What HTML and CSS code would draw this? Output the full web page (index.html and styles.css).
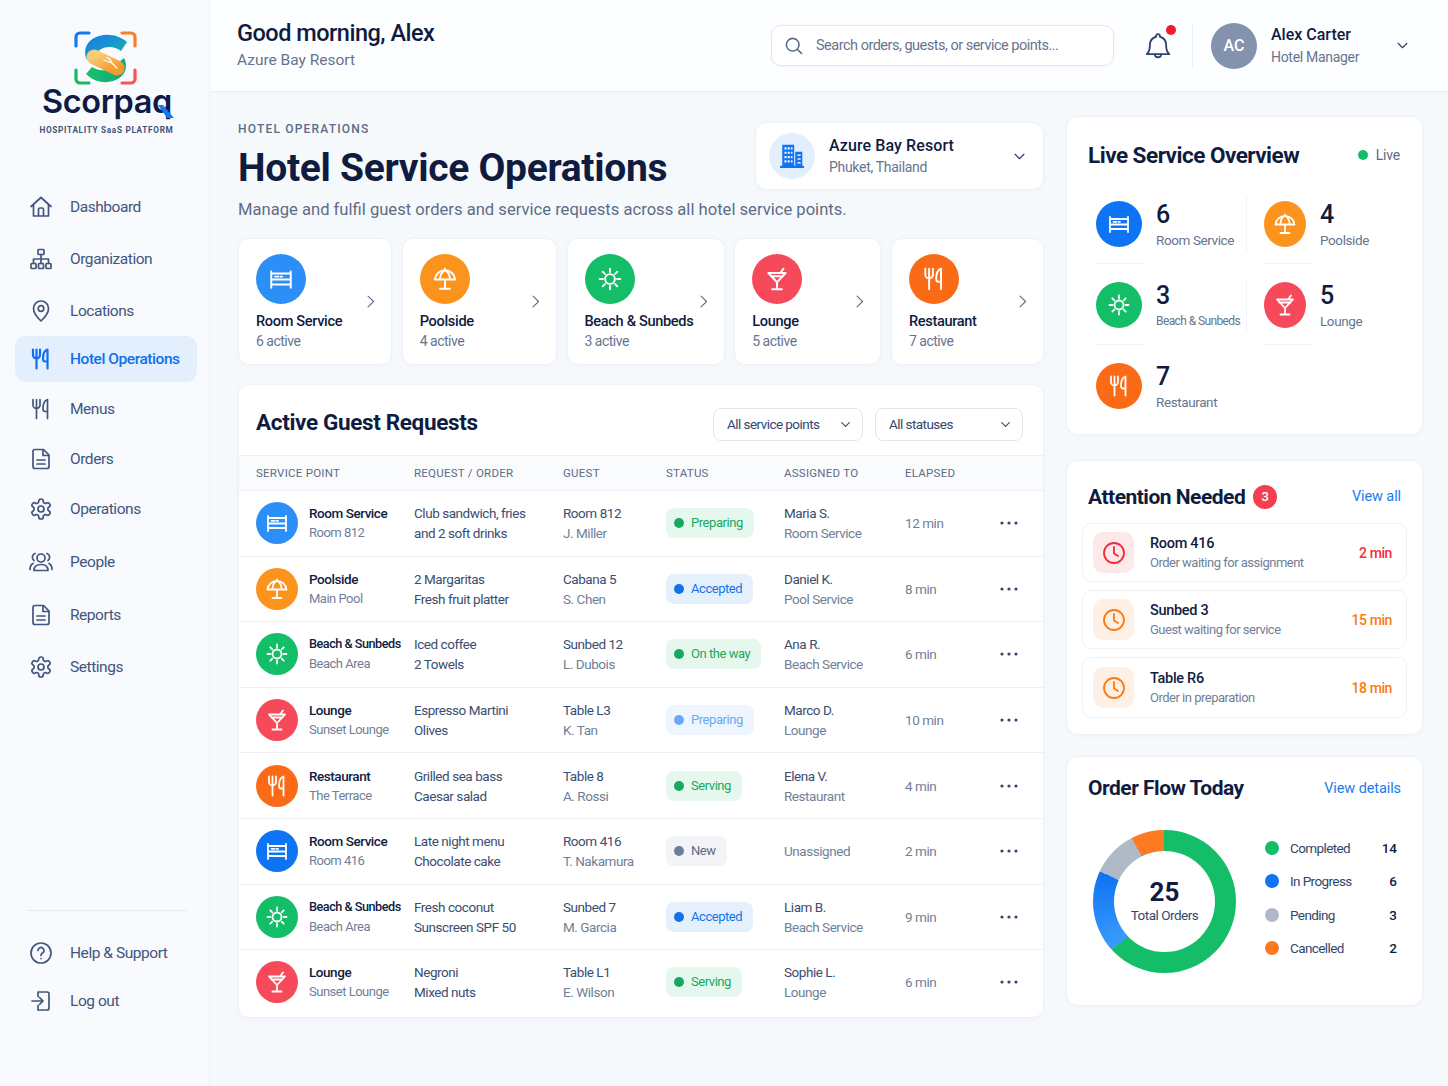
FILE: index.html
```html
<!DOCTYPE html>
<html lang="en">
<head>
  <meta charset="UTF-8" />
  <meta name="viewport" content="width=device-width, initial-scale=1.0"/>
  <title>Hotel Service Operations</title>
  <link rel="stylesheet" href="styles.css">
</head>
<body>

<svg class="sprite" aria-hidden="true">
  <symbol id="i-home" viewBox="0 0 24 24"><path d="M2 11.5 12 2.500l10 9M4.500 9.500v11.500h15V9.500M9.500 21v-6.500a1.500 1.500 0 0 1 1.500-1.500h2a1.500 1.500 0 0 1 1.500 1.500V21"/></symbol>
  <symbol id="i-org" viewBox="0 0 24 24"><rect x="9" y="2.500" width="6" height="5" rx=".8"/><rect x="2" y="16.500" width="5" height="5" rx=".8"/><rect x="9.500" y="16.500" width="5" height="5" rx=".8"/><rect x="17" y="16.500" width="5" height="5" rx=".8"/><path d="M12 7.500v9M4.500 16.500V12h15v4.500"/></symbol>
  <symbol id="i-pin" viewBox="0 0 24 24"><path d="M12 22s-7.500-7-7.500-12.500a7.500 7.500 0 0 1 15 0C19.500 15 12 22 12 22z"/><circle cx="12" cy="9.500" r="2.800"/></symbol>
  <symbol id="i-fork" viewBox="0 0 24 24"><path d="M4 2.500V8a3.500 3.500 0 0 0 7 0V2.500M7.500 2.500v19M18.500 21.500V2.500c-3 1-4.500 5-4.500 9 0 2 1 3 2 3h2.500"/></symbol>
  <symbol id="i-doc" viewBox="0 0 24 24"><path d="M6 2.500h8.500L20 8v11.500a2 2 0 0 1-2 2H6a2 2 0 0 1-2-2v-15a2 2 0 0 1 2-2z"/><path d="M14 3v5.500h5.500M8 13h8M8 17h8"/></symbol>
  <symbol id="i-gear" viewBox="0 0 24 24"><path d="M12.220 2h-.44a2 2 0 0 0-2 2v.18a2 2 0 0 1-1 1.730l-.43.25a2 2 0 0 1-2 0l-.15-.08a2 2 0 0 0-2.730.73l-.22.38a2 2 0 0 0 .73 2.730l.15.1a2 2 0 0 1 1 1.720v.51a2 2 0 0 1-1 1.740l-.15.09a2 2 0 0 0-.73 2.730l.22.38a2 2 0 0 0 2.730.73l.15-.08a2 2 0 0 1 2 0l.43.25a2 2 0 0 1 1 1.730V20a2 2 0 0 0 2 2h.44a2 2 0 0 0 2-2v-.18a2 2 0 0 1 1-1.730l.43-.25a2 2 0 0 1 2 0l.15.08a2 2 0 0 0 2.730-.73l.22-.39a2 2 0 0 0-.73-2.730l-.15-.08a2 2 0 0 1-1-1.740v-.5a2 2 0 0 1 1-1.740l.15-.09a2 2 0 0 0 .73-2.730l-.22-.38a2 2 0 0 0-2.730-.73l-.15.08a2 2 0 0 1-2 0l-.43-.25a2 2 0 0 1-1-1.730V4a2 2 0 0 0-2-2z"/><circle cx="12" cy="12" r="3"/></symbol>
  <symbol id="i-people" viewBox="0 0 24 24"><circle cx="12" cy="8" r="4"/><path d="M5 20.500c0-4 3-6 7-6s7 2 7 6zM6 3.500a4 4 0 0 0-1 7M18 3.500a4 4 0 0 1 1 7M1 19.500c0-3 1-5 3-6M23 19.500c0-3-1-5-3-6"/></symbol>
  <symbol id="i-help" viewBox="0 0 24 24"><circle cx="12" cy="12" r="10"/><path d="M9 9.500a3 3 0 1 1 4.500 2.600c-1 .6-1.500 1.200-1.500 2.400"/><path d="M12 17.500v.1"/></symbol>
  <symbol id="i-logout" viewBox="0 0 24 24"><path d="M9 3h9a2 2 0 0 1 2 2v14a2 2 0 0 1-2 2H9M9 7.500V3M9 21v-4.500M3 12h11M10.500 8.500 14 12l-3.500 3.500"/></symbol>
  <symbol id="i-search" viewBox="0 0 24 24"><circle cx="11" cy="11" r="8"/><path d="m17 17 5 5"/></symbol>
  <symbol id="i-bell" viewBox="0 0 24 24"><path d="M12 2.500a1.500 1.500 0 0 0-1.500 1.500v.6C7 5.500 5.500 8.500 5.500 11.500c0 4-1 5.500-2.500 7h18c-1.500-1.500-2.500-3-2.500-7 0-3-1.500-6-5-6.900V4A1.500 1.500 0 0 0 12 2.500z"/><path d="M9.500 18.500a2.500 2.500 0 0 0 5 0"/></symbol>
  <symbol id="i-down" viewBox="0 0 24 24"><path d="m5 8.500 7 7 7-7"/></symbol>
  <symbol id="i-right" viewBox="0 0 24 24"><path d="m8 3.500 9 8.500-9 8.500"/></symbol>
  <symbol id="i-bed" viewBox="0 0 24 24"><path d="M3 5v15M21 5v15M3 7h18M3 12.500h18M3 17h18M6.500 9.800h3M11.500 9.800h1.500"/></symbol>
  <symbol id="i-umbrella" viewBox="0 0 24 24"><path d="M2.500 12.500C3 7.500 7 4 12 4s9 3.500 9.500 8.500zM7.500 12.500C7.500 8.500 9.500 5 12 4c2.500 1 4.500 4.500 4.500 8.500M12 2.500V4M12 12.500V21M7.500 21h9"/></symbol>
  <symbol id="i-sun" viewBox="0 0 24 24"><circle cx="12" cy="12" r="4.500"/><path d="M12 2.500v3M12 18.500v3M2.500 12h3M18.500 12h3M5.300 5.300l2 2M16.700 16.700l2 2M5.300 18.700l2-2M16.700 7.300l2-2"/></symbol>
  <symbol id="i-martini" viewBox="0 0 24 24"><path d="M4 6.500h16L12 15zM12 15v6.500M7.500 21.500h9M6.500 9.500h11M15 6.500 18 2.500"/></symbol>
  <symbol id="i-clock" viewBox="0 0 24 24"><circle cx="12" cy="12" r="10"/><path d="M12 6v6.500l4 2.500"/></symbol>
  <symbol id="i-more" viewBox="0 0 18 6"><circle cx="2" cy="3" r="1.600"/><circle cx="9" cy="3" r="1.600"/><circle cx="16" cy="3" r="1.600"/></symbol>
</svg>

<aside class="sidebar">
  <div class="logo">
    <svg class="logo-mark" viewBox="0 0 64 56" width="64" height="56">
      <defs>
        <linearGradient id="lg-top" x1="0" y1="0" x2="1" y2="1"><stop offset="0" stop-color="#1778f2"/><stop offset="1" stop-color="#18b9a4"/></linearGradient>
        <linearGradient id="lg-mid" x1="0" y1="0" x2="1" y2="1"><stop offset="0" stop-color="#f8cb75"/><stop offset="1" stop-color="#f59a2e"/></linearGradient>
        <linearGradient id="lg-bot" x1="0" y1="0" x2="1" y2="0"><stop offset="0" stop-color="#17c26b"/><stop offset="1" stop-color="#12a57b"/></linearGradient>
      </defs>
      <g fill="none" stroke-width="3.200" stroke-linecap="round">
        <path stroke="#1778f2" d="M2 15V6a4 4 0 0 1 4-4h9"/>
        <path stroke="#fb7d2a" d="M48 2h9a4 4 0 0 1 4 4v9"/>
        <path stroke="#19b963" d="M2 39v9a4 4 0 0 0 4 4h9"/>
        <path stroke="#f7564a" d="M61 39v9a4 4 0 0 1-4 4h-9"/>
      </g>
      <path fill="url(#lg-top)" d="M53 11 47 20C39 14 26 14 20 26L13 29C8 18 14 8 25 5 35 2 46 5 53 11Z"/>
      <path fill="url(#lg-bot)" d="M12 43 18 36C26 41 38 41 44 32L50 27C55 37 50 47 39 50 29 53 19 50 12 43Z"/>
      <path fill="none" stroke="url(#lg-mid)" stroke-width="15" stroke-linecap="round" d="M20 26 43 37"/>
      <path fill="none" stroke="#fff" stroke-width="1.300" stroke-linecap="round" d="M30 29 38 32 43 37M33 26.500 36 28.500 38 32"/>
    </svg>
    <div class="logo-word">Scorpaq<svg class="logo-tail" viewBox="0 0 16 14" width="16" height="14"><path fill="#1778f2" d="M0 0h5l11 13H9z"/></svg></div>
    <div class="logo-tag">HOSPITALITY SaaS PLATFORM</div>
  </div>

  <nav class="nav">
    <a class="nav-item"><svg class="icon nav-icon"><use href="#i-home"/></svg>Dashboard</a>
    <a class="nav-item"><svg class="icon nav-icon"><use href="#i-org"/></svg>Organization</a>
    <a class="nav-item"><svg class="icon nav-icon"><use href="#i-pin"/></svg>Locations</a>
    <a class="nav-item active"><svg class="icon nav-icon"><use href="#i-fork"/></svg>Hotel Operations</a>
    <a class="nav-item nav-tight"><svg class="icon nav-icon"><use href="#i-fork"/></svg>Menus</a>
    <a class="nav-item nav-tight"><svg class="icon nav-icon"><use href="#i-doc"/></svg>Orders</a>
    <a class="nav-item nav-tight"><svg class="icon nav-icon"><use href="#i-gear"/></svg>Operations</a>
    <a class="nav-item nav-wide"><svg class="icon nav-icon"><use href="#i-people"/></svg>People</a>
    <a class="nav-item nav-wide"><svg class="icon nav-icon"><use href="#i-doc"/></svg>Reports</a>
    <a class="nav-item"><svg class="icon nav-icon"><use href="#i-gear"/></svg>Settings</a>
  </nav>

  <div class="side-foot">
    <a class="nav-item"><svg class="icon nav-icon"><use href="#i-help"/></svg>Help &amp; Support</a>
    <a class="nav-item"><svg class="icon nav-icon"><use href="#i-logout"/></svg>Log out</a>
  </div>
</aside>

<div class="content">
  <header class="topbar">
    <div class="greeting">
      <h2>Good morning, Alex</h2>
      <p>Azure Bay Resort</p>
    </div>
    <div class="search">
      <svg class="icon search-icon"><use href="#i-search"/></svg>
      <span>Search orders, guests, or service points...</span>
    </div>
    <div class="bell">
      <svg class="icon bell-icon"><use href="#i-bell"/></svg>
      <span class="bell-dot"></span>
    </div>
    <div class="user">
      <div class="avatar">AC</div>
      <div class="user-text">
        <div class="user-name">Alex Carter</div>
        <div class="user-role">Hotel Manager</div>
      </div>
      <svg class="icon user-caret"><use href="#i-down"/></svg>
    </div>
  </header>

  <main class="workspace">
    <div class="left-col">
      <div class="page-head">
        <div>
          <div class="eyebrow">HOTEL OPERATIONS</div>
          <h1>Hotel Service Operations</h1>
        </div>
        <div class="switcher">
          <div class="switcher-icon">
            <svg viewBox="0 0 24 24" width="26" height="26"><path fill="#0f74f3" d="M3 1.500h11v20H3zM15 8h6.500v13.500H15zM1 21h22v2H1z"/><path fill="#e6f1fd" d="M5 4h2v2H5zM8 4h2v2H8zM11 4h1.500v2H11zM5 8h2v2H5zM8 8h2v2H8zM11 8h1.500v2H11zM5 12h2v2H5zM8 12h2v2H8zM11 12h1.500v2H11zM5 16h2v2H5zM8 16h2v2H8zM11 16h1.500v2H11zM17 10.500h3v1.500h-3zM17 14h3v1.500h-3zM17 17.500h3V19h-3z"/></svg>
          </div>
          <div class="switcher-text">
            <div class="switcher-name">Azure Bay Resort</div>
            <div class="switcher-place">Phuket, Thailand</div>
          </div>
          <svg class="icon switcher-caret"><use href="#i-down"/></svg>
        </div>
      </div>
      <p class="page-desc">Manage and fulfil guest orders and service requests across all hotel service points.</p>

      <div class="service-cards">
        <div class="service-card">
          <div class="round c-blue"><svg class="icon"><use href="#i-bed"/></svg></div>
          <div class="service-name">Room Service</div>
          <div class="service-sub">6 active</div>
          <svg class="icon service-arrow"><use href="#i-right"/></svg>
        </div>
        <div class="service-card">
          <div class="round c-orange"><svg class="icon"><use href="#i-umbrella"/></svg></div>
          <div class="service-name">Poolside</div>
          <div class="service-sub">4 active</div>
          <svg class="icon service-arrow"><use href="#i-right"/></svg>
        </div>
        <div class="service-card">
          <div class="round c-green"><svg class="icon"><use href="#i-sun"/></svg></div>
          <div class="service-name">Beach &amp; Sunbeds</div>
          <div class="service-sub">3 active</div>
          <svg class="icon service-arrow"><use href="#i-right"/></svg>
        </div>
        <div class="service-card">
          <div class="round c-red"><svg class="icon"><use href="#i-martini"/></svg></div>
          <div class="service-name">Lounge</div>
          <div class="service-sub">5 active</div>
          <svg class="icon service-arrow"><use href="#i-right"/></svg>
        </div>
        <div class="service-card">
          <div class="round c-flame"><svg class="icon"><use href="#i-fork"/></svg></div>
          <div class="service-name">Restaurant</div>
          <div class="service-sub">7 active</div>
          <svg class="icon service-arrow"><use href="#i-right"/></svg>
        </div>
      </div>

      <section class="requests">
        <div class="requests-head">
          <h3>Active Guest Requests</h3>
          <div class="filters">
            <div class="select select-wide">All service points<svg class="icon"><use href="#i-down"/></svg></div>
            <div class="select">All statuses<svg class="icon"><use href="#i-down"/></svg></div>
          </div>
        </div>

        <div class="req-row req-labels">
          <div>SERVICE POINT</div><div>REQUEST / ORDER</div><div>GUEST</div><div>STATUS</div><div>ASSIGNED TO</div><div>ELAPSED</div><div></div>
        </div>

        <div class="req-row">
          <div class="point"><div class="round c-blue"><svg class="icon"><use href="#i-bed"/></svg></div><div><div class="strong">Room Service</div><div class="muted">Room 812</div></div></div>
          <div><div class="body-text">Club sandwich, fries</div><div class="body-text">and 2 soft drinks</div></div>
          <div><div class="body-text">Room 812</div><div class="muted">J. Miller</div></div>
          <div><span class="pill pill-green">Preparing</span></div>
          <div><div class="body-text">Maria S.</div><div class="muted">Room Service</div></div>
          <div class="muted">12 min</div>
          <svg class="more"><use href="#i-more"/></svg>
        </div>
        <div class="req-row">
          <div class="point"><div class="round c-orange"><svg class="icon"><use href="#i-umbrella"/></svg></div><div><div class="strong">Poolside</div><div class="muted">Main Pool</div></div></div>
          <div><div class="body-text">2 Margaritas</div><div class="body-text">Fresh fruit platter</div></div>
          <div><div class="body-text">Cabana 5</div><div class="muted">S. Chen</div></div>
          <div><span class="pill pill-blue">Accepted</span></div>
          <div><div class="body-text">Daniel K.</div><div class="muted">Pool Service</div></div>
          <div class="muted">8 min</div>
          <svg class="more"><use href="#i-more"/></svg>
        </div>
        <div class="req-row">
          <div class="point"><div class="round c-green"><svg class="icon"><use href="#i-sun"/></svg></div><div><div class="strong narrow">Beach &amp; Sunbeds</div><div class="muted">Beach Area</div></div></div>
          <div><div class="body-text">Iced coffee</div><div class="body-text">2 Towels</div></div>
          <div><div class="body-text">Sunbed 12</div><div class="muted">L. Dubois</div></div>
          <div><span class="pill pill-green">On the way</span></div>
          <div><div class="body-text">Ana R.</div><div class="muted">Beach Service</div></div>
          <div class="muted">6 min</div>
          <svg class="more"><use href="#i-more"/></svg>
        </div>
        <div class="req-row">
          <div class="point"><div class="round c-red"><svg class="icon"><use href="#i-martini"/></svg></div><div><div class="strong">Lounge</div><div class="muted">Sunset Lounge</div></div></div>
          <div><div class="body-text">Espresso Martini</div><div class="body-text">Olives</div></div>
          <div><div class="body-text">Table L3</div><div class="muted">K. Tan</div></div>
          <div><span class="pill pill-sky">Preparing</span></div>
          <div><div class="body-text">Marco D.</div><div class="muted">Lounge</div></div>
          <div class="muted">10 min</div>
          <svg class="more"><use href="#i-more"/></svg>
        </div>
        <div class="req-row">
          <div class="point"><div class="round c-flame"><svg class="icon"><use href="#i-fork"/></svg></div><div><div class="strong">Restaurant</div><div class="muted">The Terrace</div></div></div>
          <div><div class="body-text">Grilled sea bass</div><div class="body-text">Caesar salad</div></div>
          <div><div class="body-text">Table 8</div><div class="muted">A. Rossi</div></div>
          <div><span class="pill pill-green">Serving</span></div>
          <div><div class="body-text">Elena V.</div><div class="muted">Restaurant</div></div>
          <div class="muted">4 min</div>
          <svg class="more"><use href="#i-more"/></svg>
        </div>
        <div class="req-row">
          <div class="point"><div class="round c-deep"><svg class="icon"><use href="#i-bed"/></svg></div><div><div class="strong">Room Service</div><div class="muted">Room 416</div></div></div>
          <div><div class="body-text">Late night menu</div><div class="body-text">Chocolate cake</div></div>
          <div><div class="body-text">Room 416</div><div class="muted">T. Nakamura</div></div>
          <div><span class="pill pill-grey">New</span></div>
          <div class="muted">Unassigned</div>
          <div class="muted">2 min</div>
          <svg class="more"><use href="#i-more"/></svg>
        </div>
        <div class="req-row">
          <div class="point"><div class="round c-green"><svg class="icon"><use href="#i-sun"/></svg></div><div><div class="strong narrow">Beach &amp; Sunbeds</div><div class="muted">Beach Area</div></div></div>
          <div><div class="body-text">Fresh coconut</div><div class="body-text">Sunscreen SPF 50</div></div>
          <div><div class="body-text">Sunbed 7</div><div class="muted">M. Garcia</div></div>
          <div><span class="pill pill-blue">Accepted</span></div>
          <div><div class="body-text">Liam B.</div><div class="muted">Beach Service</div></div>
          <div class="muted">9 min</div>
          <svg class="more"><use href="#i-more"/></svg>
        </div>
        <div class="req-row">
          <div class="point"><div class="round c-red"><svg class="icon"><use href="#i-martini"/></svg></div><div><div class="strong">Lounge</div><div class="muted">Sunset Lounge</div></div></div>
          <div><div class="body-text">Negroni</div><div class="body-text">Mixed nuts</div></div>
          <div><div class="body-text">Table L1</div><div class="muted">E. Wilson</div></div>
          <div><span class="pill pill-green">Serving</span></div>
          <div><div class="body-text">Sophie L.</div><div class="muted">Lounge</div></div>
          <div class="muted">6 min</div>
          <svg class="more"><use href="#i-more"/></svg>
        </div>
      </section>
    </div>

    <div class="right-col">
      <section class="panel panel-live">
        <div class="panel-head">
          <h3>Live Service Overview</h3>
          <span class="live"><i></i>Live</span>
        </div>
        <div class="live-grid">
          <div class="live-item">
            <div class="round c-deep"><svg class="icon"><use href="#i-bed"/></svg></div>
            <div><div class="live-num">6</div><div class="live-label">Room Service</div></div>
          </div>
          <div class="live-item">
            <div class="round c-orange"><svg class="icon"><use href="#i-umbrella"/></svg></div>
            <div><div class="live-num">4</div><div class="live-label">Poolside</div></div>
          </div>
          <div class="live-item">
            <div class="round c-green"><svg class="icon"><use href="#i-sun"/></svg></div>
            <div><div class="live-num">3</div><div class="live-label narrow-label">Beach &amp; Sunbeds</div></div>
          </div>
          <div class="live-item">
            <div class="round c-red"><svg class="icon"><use href="#i-martini"/></svg></div>
            <div><div class="live-num">5</div><div class="live-label">Lounge</div></div>
          </div>
          <div class="live-item">
            <div class="round c-flame"><svg class="icon"><use href="#i-fork"/></svg></div>
            <div><div class="live-num">7</div><div class="live-label">Restaurant</div></div>
          </div>
        </div>
      </section>

      <section class="panel panel-attention">
        <div class="panel-head">
          <h3>Attention Needed <span class="count">3</span></h3>
          <a class="panel-link">View all</a>
        </div>
        <div class="alert">
          <div class="alert-icon tone-red"><svg class="icon"><use href="#i-clock"/></svg></div>
          <div class="alert-text"><div class="alert-title">Room 416</div><div class="alert-sub">Order waiting for assignment</div></div>
          <div class="alert-time time-red">2 min</div>
        </div>
        <div class="alert">
          <div class="alert-icon tone-orange"><svg class="icon"><use href="#i-clock"/></svg></div>
          <div class="alert-text"><div class="alert-title">Sunbed 3</div><div class="alert-sub">Guest waiting for service</div></div>
          <div class="alert-time time-orange">15 min</div>
        </div>
        <div class="alert">
          <div class="alert-icon tone-orange"><svg class="icon"><use href="#i-clock"/></svg></div>
          <div class="alert-text"><div class="alert-title">Table R6</div><div class="alert-sub">Order in preparation</div></div>
          <div class="alert-time time-orange">18 min</div>
        </div>
      </section>

      <section class="panel panel-flow">
        <div class="panel-head">
          <h3>Order Flow Today</h3>
          <a class="panel-link">View details</a>
        </div>
        <div class="flow-body">
          <div class="donut">
            <div class="donut-hole">
              <div class="donut-num">25</div>
              <div class="donut-label">Total Orders</div>
            </div>
          </div>
          <ul class="legend">
            <li><i class="dot-green"></i><span>Completed</span><b>14</b></li>
            <li><i class="dot-blue"></i><span>In Progress</span><b>6</b></li>
            <li><i class="dot-grey"></i><span>Pending</span><b>3</b></li>
            <li><i class="dot-orange"></i><span>Cancelled</span><b>2</b></li>
          </ul>
        </div>
      </section>
    </div>
  </main>
</div>

</body>
</html>
```

FILE: styles.css
```css
* {
  box-sizing: border-box;
}

body {
  margin: 0;
  display: flex;
  min-height: 100vh;
  font-family: Roboto, "Liberation Sans", sans-serif;
  background-color: #f6f9fc;
  color: #101c3f;
}

h1, h2, h3, p, ul {
  margin: 0;
  padding: 0;
}

.sprite {
  display: none;
}

.icon {
  width: 24px;
  height: 24px;
  fill: none;
  stroke: currentColor;
  stroke-width: 1.8;
  stroke-linecap: round;
  stroke-linejoin: round;
  flex: none;
}

/* Sidebar */
.sidebar {
  width: 210px;
  flex: none;
  height: 1086px;
  display: flex;
  flex-direction: column;
  padding: 31px 12px 0 15px;
  background: #f8fafe;
  border-right: 1px solid #edf1f7;
}

.logo {
  display: flex;
  flex-direction: column;
  align-items: center;
  margin-bottom: 49px;
}

.logo-mark {
  display: block;
  margin-right: 1px;
}

.logo-word {
  position: relative;
  font-family: Inter, sans-serif;
  font-size: 32.5px;
  font-weight: 600;
  line-height: 34px;
  letter-spacing: -.4px;
  color: #101b45;
  margin: -2px 0 0 2px;
}

.logo-tail {
  position: absolute;
  right: -2px;
  bottom: 0;
}

.logo-tag {
  font-size: 8.2px;
  font-weight: 700;
  letter-spacing: .7px;
  color: #3f5378;
  margin: 6px 0 0 1px;
  white-space: nowrap;
}

.nav-item {
  display: flex;
  align-items: center;
  gap: 17px;
  height: 46px;
  margin-top: 6px;
  padding-left: 14px;
  border-radius: 11px;
  font-size: 15.5px;
  letter-spacing: -.45px;
  color: #42557c;
}

.nav-item:first-child {
  margin-top: 0;
}

.nav-tight {
  margin-top: 4px;
}

.nav-wide {
  margin-top: 7px;
}

.nav-icon {
  stroke-width: 1.7;
}

.nav-item.active {
  margin-top: 2px;
  background: #e3effd;
  color: #0f6ff0;
  font-weight: 500;
}

.nav-item.active .nav-icon {
  stroke-width: 2.2;
}

.side-foot {
  margin-top: auto;
  margin-bottom: 60px;
  margin-left: 12px;
  margin-right: 9px;
  padding-top: 19px;
  border-top: 1px solid #e6ebf3;
}

.side-foot .nav-item {
  margin: 0 0 2px -12px;
}

/* Top bar */
.content {
  flex: 1;
  min-width: 0;
}

.topbar {
  height: 92px;
  display: flex;
  align-items: center;
  padding: 0 33px 0 27px;
  background: #fdfeff;
  border-bottom: 1px solid #e9eef5;
}

.greeting {
  width: 534px;
  flex: none;
  margin-bottom: 5px;
}

.greeting h2 {
  font-size: 23.5px;
  font-weight: 500;
  line-height: 30px;
  letter-spacing: -.5px;
  margin-bottom: 3px;
  color: #101c3f;
}

.greeting p {
  font-size: 15.5px;
  color: #64748f;
}

.search {
  width: 343px;
  height: 41px;
  display: flex;
  align-items: center;
  gap: 13px;
  padding-left: 12px;
  background: #fff;
  border: 1px solid #e2e8f1;
  border-radius: 10px;
  font-size: 14.5px;
  letter-spacing: -.5px;
  color: #66758f;
  box-shadow: 0 1px 3px rgba(40, 60, 100, .05);
}

.search-icon {
  width: 19px;
  height: 19px;
  stroke-width: 2;
  color: #5b6d8c;
}

.bell {
  position: relative;
  width: 30px;
  height: 30px;
  margin-left: 29px;
  color: #33466d;
}

.bell-icon {
  width: 30px;
  height: 30px;
  stroke-width: 1.5;
}

.bell-dot {
  position: absolute;
  top: -6px;
  right: -3px;
  width: 10px;
  height: 10px;
  border-radius: 50%;
  background: #f01c2c;
}

.user {
  display: flex;
  align-items: center;
  height: 42px;
  margin-left: 19px;
  padding-left: 18px;
  border-left: 1px solid #e9eef5;
}

.avatar {
  width: 46px;
  height: 46px;
  border-radius: 50%;
  display: flex;
  align-items: center;
  justify-content: center;
  background: #8493ad;
  color: #fff;
  font-size: 16px;
  font-weight: 500;
}

.user-text {
  margin-left: 14px;
  width: 127px;
}

.user-name {
  font-size: 16px;
  font-weight: 500;
  line-height: 22px;
  margin-bottom: 1px;
}

.user-role {
  font-size: 14px;
  letter-spacing: -.3px;
  color: #66758f;
  line-height: 20px;
}

.user-caret {
  width: 15px;
  height: 15px;
  stroke-width: 2;
  color: #33466d;
  margin-left: -3px;
}

/* Main layout */
.workspace {
  display: grid;
  grid-template-columns: 806px 357px;
  gap: 22px;
  padding: 24px 25px 0 28px;
  align-items: start;
}

.left-col {
  padding-top: 6px;
}

.page-head {
  display: flex;
  justify-content: space-between;
  align-items: flex-start;
}

.eyebrow {
  font-size: 12px;
  font-weight: 500;
  letter-spacing: 1.2px;
  line-height: 14px;
  color: #5d6c87;
}

h1 {
  font-size: 39px;
  font-weight: 700;
  line-height: 46px;
  letter-spacing: -.3px;
  color: #101c3f;
  margin-top: 9px;
}

.switcher {
  width: 289px;
  height: 68px;
  display: flex;
  align-items: center;
  padding: 0 16px 0 13px;
  background: #fff;
  border: 1px solid #edf1f7;
  border-radius: 12px;
  box-shadow: 0 1px 4px rgba(40, 60, 100, .04);
}

.switcher-icon {
  width: 46px;
  height: 46px;
  border-radius: 50%;
  background: #e3effd;
  display: flex;
  align-items: center;
  justify-content: center;
  flex: none;
}

.switcher-text {
  flex: 1;
  margin-left: 14px;
}

.switcher-name {
  font-size: 16px;
  font-weight: 500;
  line-height: 22px;
  letter-spacing: .1px;
}

.switcher-place {
  font-size: 14px;
  line-height: 20px;
  letter-spacing: -.3px;
  color: #66758f;
}

.switcher-caret {
  width: 15px;
  height: 15px;
  stroke-width: 2;
  color: #33466d;
}

.page-desc {
  font-size: 16.6px;
  line-height: 22px;
  color: #5d6c87;
  margin-top: 8px;
}

/* Service cards */
.service-cards {
  display: grid;
  grid-template-columns: 154px 155px 158px 147px 153px;
  gap: 9.75px;
  margin-top: 17px;
}

.service-card {
  position: relative;
  height: 127px;
  padding: 15px 17px 0;
  background: #fff;
  border: 1px solid #eef2f8;
  border-radius: 11px;
  box-shadow: 0 1px 4px rgba(40, 60, 100, .04);
}

.round {
  border-radius: 50%;
  display: flex;
  align-items: center;
  justify-content: center;
  color: #fff;
  flex: none;
}

.service-card .round {
  width: 50px;
  height: 50px;
  margin-bottom: 7px;
}

.service-card .round .icon {
  width: 26px;
  height: 26px;
}

.c-blue { background: #2b8ff7; }
.c-deep { background: #0f74f3; }
.c-orange { background: #fb931c; }
.c-green { background: #14bd67; }
.c-red { background: #f6495a; }
.c-flame { background: #fb6a17; }

.service-name {
  font-size: 14.6px;
  font-weight: 500;
  line-height: 20px;
  letter-spacing: -.35px;
}

.service-sub {
  font-size: 14px;
  line-height: 20px;
  letter-spacing: -.5px;
  color: #66758f;
}

.service-arrow {
  position: absolute;
  right: 13px;
  top: 55px;
  width: 15px;
  height: 15px;
  stroke-width: 1.7;
  color: #5a6b8b;
}

/* Requests table */
.requests {
  margin-top: 19px;
  padding-bottom: 2px;
  background: #fff;
  border: 1px solid #eef2f8;
  border-radius: 11px;
  box-shadow: 0 1px 4px rgba(40, 60, 100, .04);
  overflow: hidden;
}

.requests-head {
  height: 70px;
  display: flex;
  align-items: center;
  justify-content: space-between;
  padding: 8px 20px 0 17px;
}

.requests-head h3 {
  font-size: 22.5px;
  font-weight: 700;
  letter-spacing: -.35px;
  margin-bottom: 4px;
}

.filters {
  display: flex;
  gap: 12px;
}

.select {
  width: 148px;
  height: 33px;
  display: flex;
  align-items: center;
  justify-content: space-between;
  padding: 0 10px 0 13px;
  background: #fff;
  border: 1px solid #dfe5ee;
  border-radius: 8px;
  font-size: 13.5px;
  letter-spacing: -.55px;
  color: #33466d;
}

.select-wide {
  width: 150px;
}

.select .icon {
  width: 13px;
  height: 13px;
  stroke-width: 2;
}

.req-row {
  display: grid;
  grid-template-columns: 158px 149px 103px 118px 121px 93px 1fr;
  align-items: center;
  height: 65.6px;
  padding-left: 17px;
  border-top: 1px solid #edf1f7;
  font-size: 13.5px;
  line-height: 20px;
  letter-spacing: -.45px;
}

.req-labels {
  height: 35px;
  background: #f9fbfd;
  font-size: 11.5px;
  letter-spacing: .25px;
  color: #5d6c87;
}

.point {
  display: flex;
  align-items: center;
  gap: 11px;
}

.point .round {
  width: 42px;
  height: 42px;
}

.point .muted {
  font-size: 13px;
  letter-spacing: -.5px;
}

.strong {
  font-weight: 500;
  color: #101c3f;
  white-space: nowrap;
}

.narrow {
  font-size: 12.7px;
  letter-spacing: -.5px;
}

.muted {
  color: #707f98;
}

.body-text {
  color: #3c4d70;
}

.pill {
  display: inline-flex;
  align-items: center;
  gap: 7px;
  height: 30px;
  padding: 0 11px 0 8px;
  border-radius: 8px;
  font-size: 13px;
  white-space: nowrap;
}

.pill::before {
  content: "";
  width: 10px;
  height: 10px;
  border-radius: 50%;
  background: currentColor;
}

.pill-green { background: #e6f7ee; color: #17a862; }
.pill-blue { background: #e5f0fd; color: #1672e8; }
.pill-sky { background: #eef5fe; color: #6aa9f5; }
.pill-grey { background: #f2f4f8; color: #5d6b85; }
.pill-grey::before { background: #6f7d96; }

.more {
  width: 18px;
  height: 6px;
  fill: #33466d;
  margin-left: 2px;
}

/* Right column */
.panel {
  background: #fff;
  border: 1px solid #eef2f8;
  border-radius: 12px;
  box-shadow: 0 1px 4px rgba(40, 60, 100, .04);
  padding: 0 21px;
}

.panel-live { height: 319px; }
.panel-attention { height: 275px; margin-top: 25px; padding: 0 15px; }
.panel-flow { height: 250px; margin-top: 21px; }

.panel-head {
  display: flex;
  align-items: center;
  justify-content: space-between;
}

.panel-head h3 {
  font-size: 21px;
  font-weight: 700;
  letter-spacing: -.5px;
  display: flex;
  align-items: center;
  gap: 8px;
}

.panel-live .panel-head {
  height: 66px;
  align-items: flex-start;
  padding: 23px 1px 0 0;
}

.panel-live .panel-head h3 {
  font-size: 22.5px;
  line-height: 30px;
}

.live {
  display: flex;
  align-items: center;
  gap: 8px;
  height: 30px;
  font-size: 14px;
  letter-spacing: -.2px;
  color: #5d6c87;
}

.live i {
  width: 10px;
  height: 10px;
  border-radius: 50%;
  background: #14bd67;
}

.live-grid {
  display: grid;
  grid-template-columns: 158px 1fr;
  grid-auto-rows: 81px;
}

.live-item {
  display: flex;
  align-items: center;
  gap: 14px;
  padding-left: 8px;
  position: relative;
}

.live-item:nth-child(even) {
  padding-left: 18px;
}

/* short separators, vertical between columns and horizontal under the icons */
.live-item:nth-child(even)::before {
  content: "";
  position: absolute;
  left: 0;
  top: 14px;
  bottom: 13px;
  width: 1px;
  background: #f0f3f8;
}

.live-item:nth-child(-n+4)::after {
  content: "";
  position: absolute;
  left: 6px;
  bottom: 0;
  width: 50px;
  height: 1px;
  background: #f0f3f8;
}

.live-item:nth-child(even)::after {
  left: 16px;
}

.live-item .round {
  width: 46px;
  height: 46px;
}

.live-item:nth-child(even) .round {
  width: 42px;
}

.live-num {
  font-size: 25px;
  font-weight: 500;
  line-height: 27px;
  margin: 4px 0 1px;
}

.live-label {
  font-size: 13.5px;
  line-height: 22px;
  letter-spacing: -.4px;
  color: #66758f;
  white-space: nowrap;
}

.narrow-label {
  font-size: 12px;
  letter-spacing: -.6px;
}

.panel-attention .panel-head {
  height: 62px;
  padding: 9px 6px 0 6px;
}

.count {
  width: 24px;
  height: 24px;
  border-radius: 50%;
  background: #f43f4e;
  color: #fff;
  font-size: 13px;
  font-weight: 500;
  display: flex;
  align-items: center;
  justify-content: center;
  letter-spacing: 0;
}

.panel-link {
  font-size: 14.5px;
  letter-spacing: -.1px;
  color: #1a7cf0;
}

.alert {
  display: flex;
  align-items: center;
  height: 59px;
  margin-bottom: 8px;
  padding: 0 14px 0 10px;
  border: 1px solid #eef2f8;
  border-radius: 9px;
  background: #fff;
}

.alert:last-child {
  height: 61px;
  margin-bottom: 0;
}

.alert-icon {
  width: 41px;
  height: 41px;
  border-radius: 10px;
  display: flex;
  align-items: center;
  justify-content: center;
}

.tone-red { background: #fde8ea; color: #f6293d; }
.tone-orange { background: #fef0e4; color: #fb7a12; }

.alert-text {
  flex: 1;
  margin-left: 16px;
}

.alert-title {
  font-size: 14.5px;
  font-weight: 500;
  line-height: 20px;
  letter-spacing: -.3px;
}

.alert-sub {
  font-size: 13px;
  line-height: 18px;
  letter-spacing: -.5px;
  color: #707f98;
}

.alert-time {
  font-size: 14px;
  font-weight: 500;
  letter-spacing: -.4px;
}

.time-red { color: #f6293d; }
.time-orange { color: #fb7a12; }

.panel-flow .panel-head {
  height: 62px;
}

.flow-body {
  display: flex;
  align-items: center;
  padding-top: 11px;
}

.donut {
  width: 143px;
  height: 143px;
  margin-left: 5px;
  border-radius: 50%;
  flex: none;
  display: flex;
  align-items: center;
  justify-content: center;
  background: conic-gradient(#14bd67 0 227deg, #3b9bfb 227deg, #0f74f3 295deg, #b0b9c8 295deg 333deg, #fb7a22 333deg 360deg);
}

.donut-hole {
  width: 101px;
  height: 101px;
  border-radius: 50%;
  background: #fff;
  text-align: center;
  padding-top: 27px;
}

.donut-num {
  font-size: 26px;
  font-weight: 700;
  line-height: 28px;
}

.donut-label {
  font-size: 13.5px;
  line-height: 20px;
  letter-spacing: -.5px;
  color: #33466d;
  margin-top: -1px;
}

.legend {
  list-style: none;
  flex: 1;
  margin: 0 4px 7px 29px;
}

.legend li {
  display: flex;
  align-items: center;
  height: 33.5px;
  font-size: 13.5px;
  letter-spacing: -.6px;
  color: #33466d;
}

.legend i {
  width: 14px;
  height: 14px;
  border-radius: 50%;
  margin-right: 11px;
}

.legend span {
  flex: 1;
}

.legend b {
  font-weight: 500;
  letter-spacing: 0;
  color: #101c3f;
}

.dot-green { background: #14bd67; }
.dot-blue { background: #0f74f3; }
.dot-grey { background: #b0b9c8; }
.dot-orange { background: #fb7a22; }
```
